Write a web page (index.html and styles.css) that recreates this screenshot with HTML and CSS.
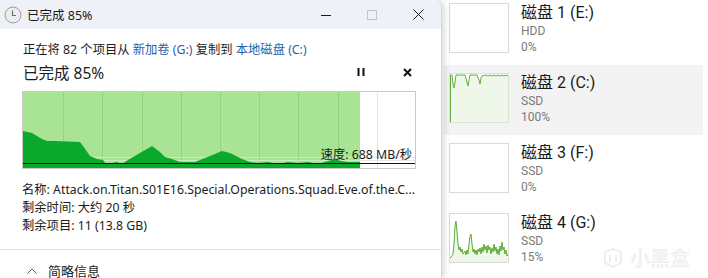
FILE: index.html
```html
<!DOCTYPE html>
<html lang="zh-CN">
<head>
    <meta charset="UTF-8">
    <title>已完成 85%</title>
    <link rel="stylesheet" href="styles.css">
</head>
<body>
    <div class="screen">
        <div class="dialog">
            <div class="titlebar">
                <svg class="app-icon" width="18" height="18" viewBox="0 0 18 18">
                    <circle cx="9" cy="9" r="8" fill="#ececec" stroke="#9c9c9c" stroke-width="1"/>
                    <path d="M8.5 4.5 V9.5 H12" fill="none" stroke="#6d6d6d" stroke-width="1.2"/>
                </svg>
                <span class="title">已完成 85%</span>
                <div class="win-buttons">
                    <span class="win-btn">
                        <svg width="10" height="10" viewBox="0 0 10 10"><path d="M0 5.5 H10" stroke="#1a1a1a" stroke-width="1"/></svg>
                    </span>
                    <span class="win-btn">
                        <svg width="10" height="10" viewBox="0 0 10 10"><rect x="0.5" y="0.5" width="9" height="9" fill="none" stroke="#c4c4c4" stroke-width="1"/></svg>
                    </span>
                    <span class="win-btn">
                        <svg width="11" height="11" viewBox="0 0 11 11"><path d="M0.5 0.5 L10.5 10.5 M10.5 0.5 L0.5 10.5" stroke="#1a1a1a" stroke-width="1"/></svg>
                    </span>
                </div>
            </div>

            <div class="dialog-body">
                <div class="desc">
                    正在将 82 个项目从 <span class="link">新加卷 (G:)</span> 复制到 <span class="link">本地磁盘 (C:)</span>
                </div>

                <div class="progress-row">
                    <span class="progress-title">已完成 85%</span>
                    <div class="actions">
                        <span class="action">
                            <svg width="8" height="8" viewBox="0 0 8 8"><path d="M1.5 0 V8 M6.5 0 V8" stroke="#111" stroke-width="2"/></svg>
                        </span>
                        <span class="action">
                            <svg width="9" height="9" viewBox="0 0 9 9"><path d="M1 1 L8 8 M8 1 L1 8" stroke="#111" stroke-width="2"/></svg>
                        </span>
                    </div>
                </div>

                <div class="graph">
                    <svg class="graph-svg" width="392" height="76" viewBox="0 0 392 76">
                        <rect x="0" y="0" width="337" height="76" fill="#a9e494"/>
                        <g stroke="#93d37c" stroke-width="1">
                            <path d="M40.5 0 V76 M79.5 0 V76 M119.5 0 V76 M158.5 0 V76 M197.5 0 V76 M236.5 0 V76 M275.5 0 V76 M315.5 0 V76"/>
                        </g>
                        <path d="M354.5 0 V76" stroke="#e4e4e4" stroke-width="1"/>
                        <path d="M0 65.5 H337 M0 68.5 H337" stroke="#cfe8c4" stroke-width="1"/>
                        <path d="M337 65.5 H392 M337 68.5 H392" stroke="#e6e6e6" stroke-width="1"/>
                        <polygon fill="#0aa82b" points="0,39 9,41 19,47 24,49 32,49 57,50 60,54 67,64 74,67 80,68 83,72 89,71 94,70 99,72 105,68 117,61 129,54 137,60 142,65 149,67 157,70 172,70 187,64 199,59 207,61 213,64 219,67 227,70 235,71 245,70 255,72 265,70 275,71 285,70 295,72 305,69 312,67 318,69 325,70 337,70 337,76 0,76"/>
                        <path d="M0 71.5 H392" stroke="#111" stroke-width="1.2"/>
                    </svg>
                    <span class="speed">速度: 688 MB/秒</span>
                </div>

                <div class="info">
                    <div class="info-line">名称: Attack.on.Titan.S01E16.Special.Operations.Squad.Eve.of.the.C...</div>
                    <div class="info-line">剩余时间: 大约 20 秒</div>
                    <div class="info-line">剩余项目: 11 (13.8 GB)</div>
                </div>
            </div>

            <div class="footer">
                <svg width="10" height="6" viewBox="0 0 10 6"><path d="M0.5 5.5 L5 1 L9.5 5.5" fill="none" stroke="#555" stroke-width="1"/></svg>
                <span>简略信息</span>
            </div>
        </div>

        <div class="disks">
            <div class="disk-row">
                <div class="thumb"></div>
                <div class="disk-text">
                    <div class="disk-name">磁盘 1 (E:)</div>
                    <div class="disk-sub">HDD</div>
                    <div class="disk-sub">0%</div>
                </div>
            </div>

            <div class="disk-row selected">
                <div class="thumb thumb-green">
                    <svg width="58" height="48" viewBox="0 0 58 48">
                        <polygon fill="#eef7e9" points="0,48 0,1 2,1 3,10 4,14 5,8 6,1 15,1 17,8 18,12 19,6 20,1 27,1 29,6 30,10 31,4 32,2 36,1 38,2 40,1 42,2 44,1 46,2 48,1 50,2 52,1 54,2 56,1 58,2 58,48"/>
                        <polyline fill="none" stroke="#62b03e" stroke-width="1" points="0.5,48 0.5,1 2,1 3,10 4,14 5,8 6,1 15,1 17,8 18,12 19,6 20,1 27,1 29,6 30,10 31,4 32,2 36,1 38,2 40,1 42,2 44,1 46,2 48,1 50,2 52,1 54,2 56,1 58,2"/>
                    </svg>
                </div>
                <div class="disk-text">
                    <div class="disk-name">磁盘 2 (C:)</div>
                    <div class="disk-sub">SSD</div>
                    <div class="disk-sub">100%</div>
                </div>
            </div>

            <div class="disk-row">
                <div class="thumb"></div>
                <div class="disk-text">
                    <div class="disk-name">磁盘 3 (F:)</div>
                    <div class="disk-sub">SSD</div>
                    <div class="disk-sub">0%</div>
                </div>
            </div>

            <div class="disk-row">
                <div class="thumb">
                    <svg width="58" height="48" viewBox="0 0 58 48">
                        <polygon fill="#eef7e9" points="0,44 2,42 3,40 4,30 5,12 6,7 7,18 8,30 9,36 10,33 11,38 12,35 13,40 15,37 16,41 17,36 18,40 19,30 20,22 21,20 22,30 23,38 24,35 25,40 26,36 27,41 28,35 29,38 30,34 31,40 32,33 33,38 34,30 35,36 36,32 37,39 38,31 39,36 40,33 41,40 42,34 43,38 44,30 45,37 46,33 47,40 48,35 49,41 50,32 51,37 52,28 53,36 54,33 55,40 56,36 57,42 58,40 58,48 0,48"/>
                        <polyline fill="none" stroke="#5aae33" stroke-width="1" points="0,44 2,42 3,40 4,30 5,12 6,7 7,18 8,30 9,36 10,33 11,38 12,35 13,40 15,37 16,41 17,36 18,40 19,30 20,22 21,20 22,30 23,38 24,35 25,40 26,36 27,41 28,35 29,38 30,34 31,40 32,33 33,38 34,30 35,36 36,32 37,39 38,31 39,36 40,33 41,40 42,34 43,38 44,30 45,37 46,33 47,40 48,35 49,41 50,32 51,37 52,28 53,36 54,33 55,40 56,36 57,42 58,40"/>
                    </svg>
                </div>
                <div class="disk-text">
                    <div class="disk-name">磁盘 4 (G:)</div>
                    <div class="disk-sub">SSD</div>
                    <div class="disk-sub">15%</div>
                </div>
            </div>

            <div class="watermark">
                <svg width="22" height="20" viewBox="0 0 22 20">
                    <path d="M3 4 L11 1 L19 4 V15 L11 19 L3 15 Z M8 7 V14 M14 7 V14" fill="none" stroke="#eeeeee" stroke-width="2"/>
                </svg>
                <span>小黑盒</span>
            </div>
        </div>
    </div>
</body>
</html>
```

FILE: styles.css
```css
* {
    box-sizing: border-box;
}

body {
    margin: 0;
    font-family: "Segoe UI", "Noto Sans", "Noto Sans CJK SC", sans-serif;
    background: #ffffff;
    color: #1b1b1b;
    overflow: hidden;
}

.screen {
    display: flex;
    width: 708px;
    height: 278px;
}

/* copy dialog */

.dialog {
    position: relative;
    z-index: 1;
    width: 442px;
    height: 278px;
    flex-shrink: 0;
    background: #ffffff;
    border-right: 1px solid #d6d6d6;
    border-radius: 0 8px 0 0;
    box-shadow: 2px 0 7px rgba(0,0,0,0.16);
    display: flex;
    flex-direction: column;
}

.titlebar {
    height: 29px;
    display: flex;
    align-items: center;
    padding-left: 4px;
    background: #eef1f7;
    border-radius: 0 8px 0 0;
}

.app-icon {
    margin-top: 1px;
}

.title {
    margin-left: 5px;
    font-size: 12.5px;
}

.win-buttons {
    margin-left: auto;
    display: flex;
    height: 29px;
}

.win-btn {
    width: 46px;
    display: flex;
    align-items: center;
    justify-content: center;
}

.dialog-body {
    padding: 12px 25px 0 22px;
}

.desc {
    font-size: 12.3px;
    line-height: 18px;
    padding-left: 1px;
    white-space: nowrap;
}

.link {
    color: #1f5fae;
}

.progress-row {
    margin-top: 2px;
    height: 22px;
    display: flex;
    align-items: center;
}

.progress-title {
    font-size: 15.5px;
    padding-left: 1px;
}

.actions {
    margin-left: auto;
    display: flex;
    gap: 28px;
}

.action {
    width: 18px;
    height: 18px;
    display: flex;
    align-items: center;
    justify-content: center;
}

.graph {
    position: relative;
    margin-top: 8px;
    width: 394px;
    height: 78px;
    border: 1px solid #c9c9c9;
}

.graph-svg {
    display: block;
}

.speed {
    position: absolute;
    right: 3px;
    bottom: 6px;
    font-size: 12.3px;
    line-height: 14px;
    color: #1b1b1b;
}

.info {
    margin-top: 12px;
}

.info-line {
    font-size: 12.3px;
    line-height: 18px;
    white-space: nowrap;
}

.footer {
    margin-top: 14px;
    border-top: 1px solid #e5e5e5;
    padding: 12px 0 0 27px;
    display: flex;
    align-items: center;
    gap: 11px;
    font-size: 13px;
    line-height: 18px;
}

/* task manager disk list */

.disks {
    position: relative;
    flex: 1;
    padding: 0 5px 0 2px;
    margin-top: -5px;
    font-family: Roboto, "Noto Sans CJK SC", sans-serif;
}

.disk-row {
    height: 70px;
    display: flex;
    padding: 8px 0 0 5px;
    gap: 12px;
}

.disk-row.selected {
    background: #f3f3f3;
}

.thumb {
    width: 60px;
    height: 50px;
    border: 1px solid #dadada;
    background: #ffffff;
}

.thumb svg {
    display: block;
}

.thumb-green {
    border-color: #d8e6d0;
}

.disk-name {
    font-size: 16px;
    line-height: 20px;
    color: #1a1a1a;
}

.disk-sub {
    font-size: 12px;
    line-height: 16px;
    color: #7a7a7a;
}

.watermark {
    position: absolute;
    right: 18px;
    bottom: 6px;
    display: flex;
    align-items: center;
    gap: 6px;
    font-size: 20px;
    color: #f1f1f1;
    font-weight: bold;
}
```
